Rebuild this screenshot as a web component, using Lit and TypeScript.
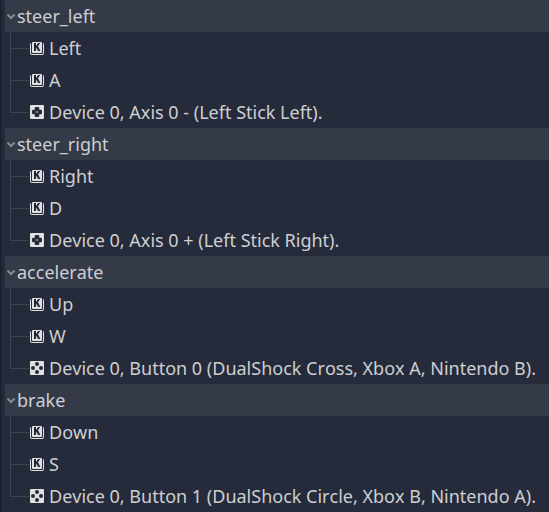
import { LitElement, html, css, svg } from "lit";
import { customElement, property, state } from "lit/decorators.js";

type Kind = "key" | "axis" | "button";
interface InputEvent {
  kind: Kind;
  label: string;
}
interface Action {
  name: string;
  events: InputEvent[];
}

const ACTIONS: Action[] = [
  {
    name: "steer_left",
    events: [
      { kind: "key", label: "Left" },
      { kind: "key", label: "A" },
      { kind: "axis", label: "Device 0, Axis 0 - (Left Stick Left)." },
    ],
  },
  {
    name: "steer_right",
    events: [
      { kind: "key", label: "Right" },
      { kind: "key", label: "D" },
      { kind: "axis", label: "Device 0, Axis 0 + (Left Stick Right)." },
    ],
  },
  {
    name: "accelerate",
    events: [
      { kind: "key", label: "Up" },
      { kind: "key", label: "W" },
      { kind: "button", label: "Device 0, Button 0 (DualShock Cross, Xbox A, Nintendo B)." },
    ],
  },
  {
    name: "brake",
    events: [
      { kind: "key", label: "Down" },
      { kind: "key", label: "S" },
      { kind: "button", label: "Device 0, Button 1 (DualShock Circle, Xbox B, Nintendo A)." },
    ],
  },
];

const GLYPHS = {
  // Key cap with a K cut out, sitting in an open frame
  key: svg`
    <path fill-rule="evenodd" d="M4 2h8a1 1 0 0 1 1 1v9a1 1 0 0 1-1 1H4a1 1 0 0 1-1-1V3a1 1 0 0 1 1-1zM5 3v8h2V8.600l.5-.6 1.600 3h2.400L9 6.300 11.300 3H9L7 6V3z"/>
    <path d="M1 3.500V13a2 2 0 0 0 2 2h10a2 2 0 0 0 2-2V3.500h-1V13a1 1 0 0 1-1 1H3a1 1 0 0 1-1-1V3.500z"/>`,
  // Directional pad with a centre dot
  axis: svg`
    <path fill-rule="evenodd" d="M2 1h12a1 1 0 0 1 1 1v12a1 1 0 0 1-1 1H2a1 1 0 0 1-1-1V2a1 1 0 0 1 1-1zM7 3a1.300 1.300 0 0 0-1.300 1.300v1.400H4.300A1.300 1.300 0 0 0 3 7v2a1.300 1.300 0 0 0 1.300 1.300h1.400v1.400A1.300 1.300 0 0 0 7 13h2a1.300 1.300 0 0 0 1.300-1.300v-1.400h1.400A1.300 1.300 0 0 0 13 9V7a1.300 1.300 0 0 0-1.300-1.300h-1.400V4.300A1.300 1.300 0 0 0 9 3z"/>
    <circle cx="8" cy="8" r=".8"/>`,
  // Four face buttons
  button: svg`
    <path fill-rule="evenodd" d="M2 1h12a1 1 0 0 1 1 1v12a1 1 0 0 1-1 1H2a1 1 0 0 1-1-1V2a1 1 0 0 1 1-1zM8 2a2 2 0 0 0 0 4 2 2 0 0 0 0-4zM4 6a2 2 0 0 0 0 4 2 2 0 0 0 0-4zM12 6a2 2 0 0 0 0 4 2 2 0 0 0 0-4zM8 10a2 2 0 0 0 0 4 2 2 0 0 0 0-4z"/>`,
};

@customElement("input-action")
export class InputAction extends LitElement {
  @property({ attribute: false }) action!: Action;
  @state() private open = true;

  static styles = css`
    :host {
      display: block;
    }
    .header {
      display: flex;
      align-items: center;
      width: 100%;
      height: 32px;
      margin: 0;
      padding: 0;
      border: 0;
      background: #343a48;
      color: inherit;
      font: inherit;
      font-kerning: none;
      text-align: left;
      white-space: nowrap;
      cursor: pointer;
    }
    .arrow {
      flex: none;
      width: 12px;
      height: 12px;
      fill: none;
      stroke: #858993;
      stroke-width: 2;
    }
    .arrow.closed {
      transform: rotate(-90deg);
    }
    .events {
      list-style: none;
      margin: 0;
      padding: 0 0 0 5px;
    }
    .event {
      display: flex;
      align-items: center;
      height: 32px;
      white-space: nowrap;
    }
    .branch {
      flex: none;
      align-self: stretch;
      display: grid;
      grid-template-rows: 17px 15px;
      width: 19px;
    }
    .branch::before,
    .branch::after {
      content: "";
      border-left: 1px solid #3e4350;
    }
    .branch::before {
      border-bottom: 1px solid #3e4350;
    }
    .event:last-child .branch::after {
      border: 0;
    }
    .icon {
      flex: none;
      width: 16px;
      height: 16px;
      margin-right: 4px;
      fill: #e0e0e0;
    }
  `;

  render() {
    return html`
      <button class="header" aria-expanded=${this.open} @click=${() => (this.open = !this.open)}>
        <svg class="arrow ${this.open ? "" : "closed"}" viewBox="0 0 12 12" aria-hidden="true">
          <path d="M2.500 4.500l3.500 3.500 3.500-3.500" />
        </svg>
        <span>${this.action.name}</span>
      </button>
      ${this.open
        ? html`<ul class="events">
            ${this.action.events.map(
              (e) => html`<li class="event">
                <span class="branch"></span>
                <svg class="icon" viewBox="0 0 16 16" aria-hidden="true">${GLYPHS[e.kind]}</svg>
                <span>${e.label}</span>
              </li>`
            )}
          </ul>`
        : ""}
    `;
  }
}

@customElement("app-root")
export class AppRoot extends LitElement {
  static styles = css`
    :host {
      display: block;
      box-sizing: border-box;
      min-height: 100vh;
      overflow: hidden;
      padding-left: 3px;
      border-left: 2px solid #1c2131;
      background: #262b3b;
      color: #cdcfd2;
      font: 18px/32px "Noto Sans", sans-serif;
      font-kerning: none;
    }
  `;

  render() {
    return html`${ACTIONS.map((a) => html`<input-action .action=${a}></input-action>`)}`;
  }
}
